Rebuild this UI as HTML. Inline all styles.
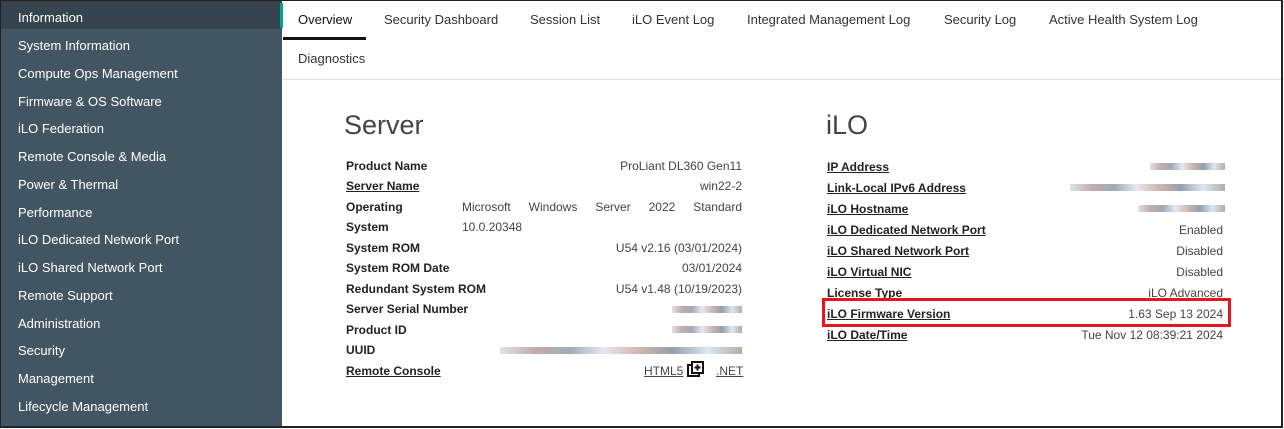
<!DOCTYPE html>
<html><head><style>
*{margin:0;padding:0;box-sizing:border-box}
body{width:1284px;height:429px;overflow:hidden;background:#fff;font-family:"Liberation Sans",sans-serif;position:relative}
.frame{position:absolute;left:0;top:0;width:1283px;height:428px;border:1px solid #222;border-width:1px 2px 2px 1px}
.side{position:absolute;left:1px;top:1px;width:281px;height:426px;background:#425563}
.side .it{position:absolute;left:17px;color:#fff;font-size:13px}
.side .act{position:absolute;left:0;top:0;width:281px;height:28px;background:#36444f}
.green{position:absolute;left:280px;top:3px;width:3px;height:25px;background:#01a982}
.tab{position:absolute;font-size:13px;color:#333}
.ul{position:absolute;left:283px;top:37px;width:83px;height:3px;background:#111}
.hr{position:absolute;left:283px;top:79px;width:998px;height:1px;background:#e0e0e0}
h1{position:absolute;font-weight:normal;font-size:27px;color:#444}
.r{position:absolute;font-size:12px;color:#333}
.l{font-weight:bold;color:#222}
.u{text-decoration:underline}
.v{position:absolute;font-size:12px;color:#444;text-align:right}
.red{position:absolute;left:822px;top:298px;width:409px;height:29px;border:3px solid #e8141f}
.blur{position:absolute;height:7px;background:linear-gradient(90deg,#cfd8e0,#a88,#789,#dde,#b98,#678,#cde,#987);opacity:.7}
</style></head><body>
<div class="side">
<div class="act"></div>
<div class="it" style="top:9px">Information</div>
<div class="it" style="top:37px">System Information</div>
<div class="it" style="top:65px">Compute Ops Management</div>
<div class="it" style="top:93px">Firmware &amp; OS Software</div>
<div class="it" style="top:120px">iLO Federation</div>
<div class="it" style="top:148px">Remote Console &amp; Media</div>
<div class="it" style="top:176px">Power &amp; Thermal</div>
<div class="it" style="top:204px">Performance</div>
<div class="it" style="top:231px">iLO Dedicated Network Port</div>
<div class="it" style="top:259px">iLO Shared Network Port</div>
<div class="it" style="top:287px">Remote Support</div>
<div class="it" style="top:315px">Administration</div>
<div class="it" style="top:342px">Security</div>
<div class="it" style="top:370px">Management</div>
<div class="it" style="top:398px">Lifecycle Management</div>
</div>
<div class="green"></div>
<div class="tab" style="left:298px;top:12px;color:#111">Overview</div>
<div class="tab" style="left:384px;top:12px">Security Dashboard</div>
<div class="tab" style="left:530px;top:12px">Session List</div>
<div class="tab" style="left:632px;top:12px">iLO Event Log</div>
<div class="tab" style="left:747px;top:12px">Integrated Management Log</div>
<div class="tab" style="left:944px;top:12px">Security Log</div>
<div class="tab" style="left:1049px;top:12px">Active Health System Log</div>
<div class="tab" style="left:298px;top:51px">Diagnostics</div>
<div class="ul"></div><div class="hr"></div>
<h1 style="left:344px;top:110px">Server</h1>
<h1 style="left:826px;top:110px">iLO</h1>

<div class="r l" style="left:346px;top:159px">Product Name</div><div class="v" style="right:542px;top:159px">ProLiant DL360 Gen11</div>
<div class="r l u" style="left:346px;top:179px">Server Name</div><div class="v" style="right:542px;top:179px">win22-2</div>
<div class="r l" style="left:346px;top:200px">Operating</div><div class="v" style="left:462px;width:280px;top:200px;display:flex;justify-content:space-between"><span>Microsoft</span><span>Windows</span><span>Server</span><span>2022</span><span>Standard</span></div>
<div class="r l" style="left:346px;top:220px">System</div><div class="v" style="left:462px;top:220px">10.0.20348</div>
<div class="r l" style="left:346px;top:241px">System ROM</div><div class="v" style="right:542px;top:241px">U54 v2.16 (03/01/2024)</div>
<div class="r l" style="left:346px;top:261px">System ROM Date</div><div class="v" style="right:542px;top:261px">03/01/2024</div>
<div class="r l" style="left:346px;top:282px">Redundant System ROM</div><div class="v" style="right:542px;top:282px">U54 v1.48 (10/19/2023)</div>
<div class="r l" style="left:346px;top:302px">Server Serial Number</div><div class="blur" style="left:672px;width:70px;top:306px"></div>
<div class="r l" style="left:346px;top:323px">Product ID</div><div class="blur" style="left:672px;width:70px;top:326px"></div>
<div class="r l" style="left:346px;top:343px">UUID</div><div class="blur" style="left:500px;width:242px;top:347px"></div>
<div class="r l u" style="left:346px;top:364px">Remote Console</div>
<div class="v u" style="left:644px;top:364px">HTML5</div>
<svg style="position:absolute;left:687px;top:361px" width="18" height="17" viewBox="0 0 18 17"><rect x="1" y="4" width="11" height="11" fill="#fff" stroke="#111" stroke-width="2"/><rect x="5" y="1" width="11" height="11" fill="#fff" stroke="#111" stroke-width="2"/><path d="M10.5 3.5v6M7.5 6.5h6" stroke="#111" stroke-width="2"/></svg>
<div class="v u" style="left:716px;top:364px">.NET</div>

<div class="r l u" style="left:827px;top:160px">IP Address</div><div class="blur" style="left:1150px;width:75px;top:163px"></div>
<div class="r l u" style="left:827px;top:181px">Link-Local IPv6 Address</div><div class="blur" style="left:1070px;width:155px;top:184px"></div>
<div class="r l u" style="left:827px;top:202px">iLO Hostname</div><div class="blur" style="left:1138px;width:87px;top:205px"></div>
<div class="r l u" style="left:827px;top:223px">iLO Dedicated Network Port</div><div class="v" style="right:61px;top:223px">Enabled</div>
<div class="r l u" style="left:827px;top:244px">iLO Shared Network Port</div><div class="v" style="right:61px;top:244px">Disabled</div>
<div class="r l u" style="left:827px;top:265px">iLO Virtual NIC</div><div class="v" style="right:61px;top:265px">Disabled</div>
<div class="r l" style="left:827px;top:286px">License Type</div><div class="v" style="right:61px;top:286px">iLO Advanced</div>
<div class="r l u" style="left:827px;top:307px">iLO Firmware Version</div><div class="v" style="right:61px;top:307px">1.63 Sep 13 2024</div>
<div class="r l u" style="left:827px;top:328px">iLO Date/Time</div><div class="v" style="right:61px;top:328px">Tue Nov 12 08:39:21 2024</div>
<div class="red"></div>
<div class="frame"></div>
</body></html>
